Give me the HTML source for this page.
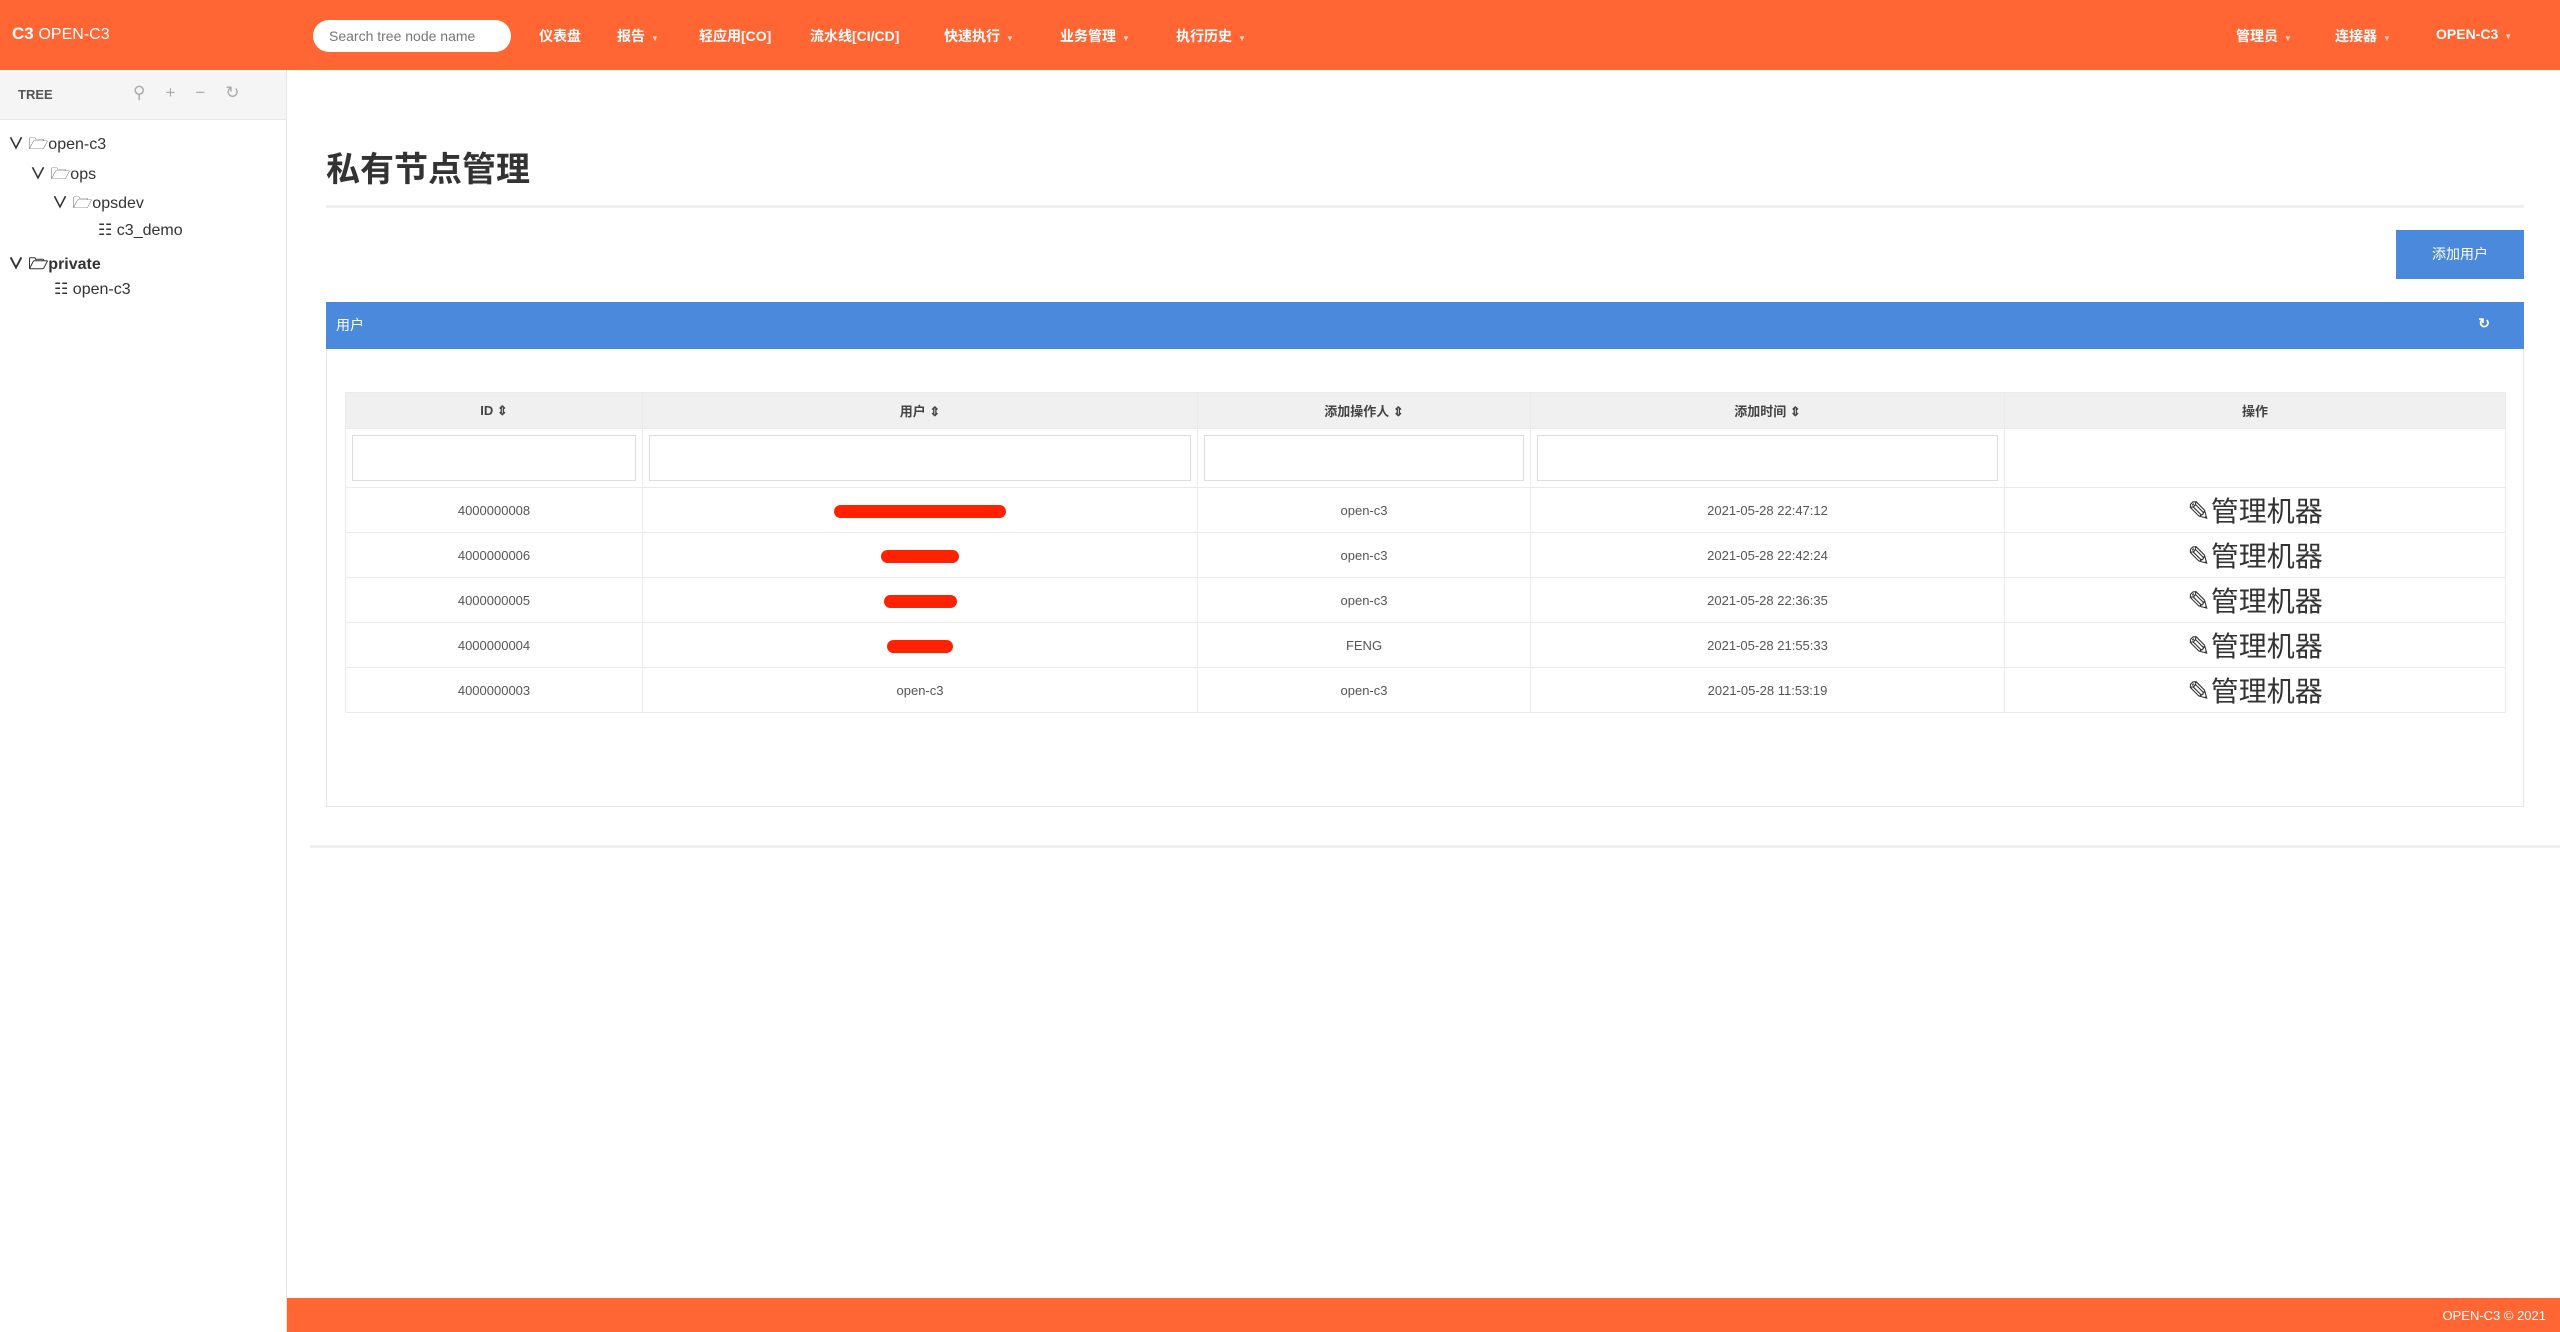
<!DOCTYPE html>
<html><head><meta charset="utf-8"><style>
*{box-sizing:border-box;margin:0;padding:0}
body{width:2560px;height:1332px;position:relative;background:#fff;font-family:"Liberation Sans","Noto Sans CJK SC",sans-serif;color:#333;overflow:hidden}
.a{position:absolute}
.hdr{left:0;top:0;width:2560px;height:70px;background:#ff6633}
.nav{color:#fff;font-size:14px;top:26px;white-space:nowrap;font-weight:bold}
.car{font-size:8px;opacity:.7;margin-left:6px}
.side{left:0;top:70px;width:287px;height:1262px;border-right:1px solid #e5e5e5}
.tree{font-size:16px;color:#333;white-space:nowrap}
.tb{border-collapse:collapse;position:absolute;left:345px;top:392px;width:2161px;font-size:13px;color:#555}
.tb td,.tb th{border:1px solid #e8ecef;text-align:center}
.tb th{background:#f0f0f0;height:36px;font-weight:bold;color:#444}
.tb tr.r td{height:45px}
.inp{height:46px;margin:0 6px;border:1px solid #ddd;background:#fff}
.red{display:inline-block;background:#ff2200;border-radius:8px;height:13px;vertical-align:middle}
.act{font-size:28px;color:#333}
</style></head><body>
<div class="a hdr"></div>
<div class="a" style="left:12px;top:24px;color:#fff;font-size:17px;font-weight:bold">C3 <span style="font-weight:normal;font-size:16px">OPEN-C3</span></div>
<div class="a" style="left:313px;top:20px;width:198px;height:32px;background:#fff;border-radius:16px;font-size:14px;color:#777;padding:8px 16px">Search tree node name</div>
<div class="a nav" style="left:539px">仪表盘</div>
<div class="a nav" style="left:617px">报告<span class="car">▼</span></div>
<div class="a nav" style="left:699px">轻应用[CO]</div>
<div class="a nav" style="left:810px">流水线[CI/CD]</div>
<div class="a nav" style="left:944px">快速执行<span class="car">▼</span></div>
<div class="a nav" style="left:1060px">业务管理<span class="car">▼</span></div>
<div class="a nav" style="left:1176px">执行历史<span class="car">▼</span></div>
<div class="a nav" style="left:2236px">管理员<span class="car">▼</span></div>
<div class="a nav" style="left:2335px">连接器<span class="car">▼</span></div>
<div class="a nav" style="left:2436px">OPEN-C3<span class="car">▼</span></div>

<div class="a side"></div>
<div class="a" style="left:0;top:72px;width:286px;height:48px;background:#f5f5f5;border-bottom:1px solid #e8e8e8"></div>
<div class="a" style="left:18px;top:87px;font-size:13px;font-weight:bold;color:#555">TREE</div>
<div class="a" style="left:133px;top:83px;font-size:17px;color:#aaa;letter-spacing:20px">⚲+−↻</div>
<div class="a tree" style="left:8px;top:130px"><b>∨</b> 🗁open-c3</div>
<div class="a tree" style="left:30px;top:160px"><b>∨</b> 🗁ops</div>
<div class="a tree" style="left:52px;top:189px"><b>∨</b> 🗁opsdev</div>
<div class="a tree" style="left:98px;top:220px">☷ c3_demo</div>
<div class="a tree" style="left:8px;top:250px;font-weight:bold"><b>∨</b> 🗁private</div>
<div class="a tree" style="left:54px;top:279px">☷ open-c3</div>

<div class="a" style="left:326px;top:142px;font-size:34px;color:#333;font-weight:bold">私有节点管理</div>
<div class="a" style="left:326px;top:205px;width:2198px;height:3px;background:#f0f0f0"></div>
<div class="a" style="left:2396px;top:230px;width:128px;height:49px;background:#4a89dc;color:#fff;font-size:14px;text-align:center;line-height:49px">添加用户</div>
<div class="a" style="left:326px;top:302px;width:2198px;height:505px;border:1px solid #e5e5e5"></div>
<div class="a" style="left:326px;top:302px;width:2198px;height:47px;background:#4a89dc;color:#fff;font-size:14px;padding:13px 10px">用户<span style="float:right;margin-right:24px;font-weight:bold">↻</span></div>
<table class="tb">
<tr><th style="width:297px">ID ⇕</th><th style="width:555px">用户 ⇕</th><th style="width:333px">添加操作人 ⇕</th><th style="width:474px">添加时间 ⇕</th><th>操作</th></tr>
<tr><td style="height:59px"><div class="inp"></div></td><td><div class="inp"></div></td><td><div class="inp"></div></td><td><div class="inp"></div></td><td></td></tr>
<tr class="r"><td>4000000008</td><td><span class="red" style="width:172px"></span></td><td>open-c3</td><td>2021-05-28 22:47:12</td><td class="act">✎管理机器</td></tr>
<tr class="r"><td>4000000006</td><td><span class="red" style="width:78px"></span></td><td>open-c3</td><td>2021-05-28 22:42:24</td><td class="act">✎管理机器</td></tr>
<tr class="r"><td>4000000005</td><td><span class="red" style="width:73px"></span></td><td>open-c3</td><td>2021-05-28 22:36:35</td><td class="act">✎管理机器</td></tr>
<tr class="r"><td>4000000004</td><td><span class="red" style="width:66px"></span></td><td>FENG</td><td>2021-05-28 21:55:33</td><td class="act">✎管理机器</td></tr>
<tr class="r"><td>4000000003</td><td>open-c3</td><td>open-c3</td><td>2021-05-28 11:53:19</td><td class="act">✎管理机器</td></tr>
</table>
<div class="a" style="left:310px;top:845px;width:2250px;height:3px;background:#f0f0f0"></div>
<div class="a" style="left:287px;top:1298px;width:2273px;height:34px;background:#ff6633;color:#fff;font-size:13px;text-align:right;padding:10px 14px">OPEN-C3 © 2021</div>
</body></html>
